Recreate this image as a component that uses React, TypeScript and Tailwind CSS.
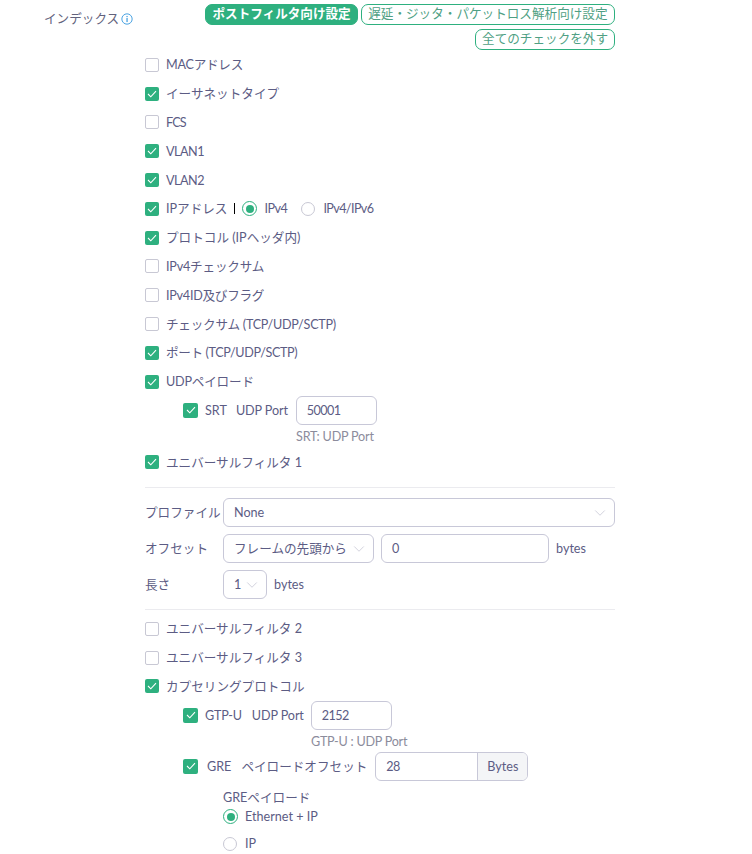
import { ChevronDown } from 'lucide-react';

function CheckBox(props: { checked?: boolean; nested?: boolean }) {
  if (props.checked) {
    return (
      <span className={`flex shrink-0 items-center justify-center rounded-[2px] bg-[#2eb07f] ${props.nested ? 'h-[15px] w-[15px]' : 'h-[14px] w-[14px]'}`}>
        <svg width="10" height="8" viewBox="0 0 10 8" fill="none">
          <path d="M1 4l2.8 2.8L9 1.2" stroke="#fff" strokeWidth="1.1" />
        </svg>
      </span>
    );
  }
  return <span className="block h-[14px] w-[14px] shrink-0 rounded-[2px] border border-[#c8c8d4] bg-white" />;
}

function Radio(props: { checked?: boolean; className?: string }) {
  if (props.checked) {
    return (
      <span className={`flex h-[15px] w-[15px] shrink-0 items-center justify-center rounded-full border border-[#2eb07f] bg-white ${props.className ?? ''}`}>
        <span className="h-[8px] w-[8px] rounded-full bg-[#2eb07f]" />
      </span>
    );
  }
  return <span className={`block h-[14px] w-[14px] shrink-0 rounded-full border border-[#c8c8d4] bg-white ${props.className ?? ''}`} />;
}

function CheckRow(props: { label: string; checked?: boolean; tight?: string }) {
  return (
    <div className="flex h-[28.8px] items-center gap-[7px]">
      <CheckBox checked={props.checked} />
      <span className={`pt-[2px] ${props.tight ?? ''}`}>{props.label}</span>
    </div>
  );
}

function Select(props: { value: string; className: string }) {
  return (
    <div className={`flex h-[29px] shrink-0 items-center justify-between rounded-[6px] border border-[#c8c8d8] bg-white pl-[10px] pr-[5px] ${props.className}`}>
      <span className="pt-[2px]">{props.value}</span>
      <ChevronDown size={18} strokeWidth={0.9} className="text-[#bcbccc]" />
    </div>
  );
}

function Input(props: { value: string; className: string }) {
  return (
    <div className={`flex h-[29px] shrink-0 items-center rounded-[6px] border border-[#c8c8d8] bg-white pl-[10px] pt-[2px] tracking-[-0.6px] ${props.className}`}>
      {props.value}
    </div>
  );
}

export default function App() {
  return (
    <div
      className="h-[854px] w-[752px] overflow-hidden bg-white pt-[4px] text-[12.6px] text-[#5c5c84]"
      style={{ fontFamily: 'Lato, "Noto Sans CJK JP", sans-serif' }}
    >
      <div className="ml-[44px] flex w-[571px]">
        <div className="flex h-[21px] w-[120px] shrink-0 items-center gap-[2px] pt-[8px] text-[#62627c]">
          <span className="pt-[2px]">インデックス</span>
          <svg width="12" height="12" viewBox="0 0 13 13" fill="none" className="shrink-0">
            <circle cx="6.5" cy="6.5" r="5.6" stroke="#3b9be0" />
            <rect x="5.9" y="5.4" width="1.3" height="4.4" fill="#3b9be0" />
            <rect x="5.9" y="3.2" width="1.3" height="1.3" fill="#3b9be0" />
          </svg>
        </div>
        <div className="flex grow flex-wrap justify-end gap-x-[3px] gap-y-[4px]">
          <span className="flex h-[21px] items-center rounded-[7px] border border-[#2eb07f] bg-[#2eb07f] px-[6px] font-bold text-white">
            ポストフィルタ向け設定
          </span>
          <span className="flex h-[21px] items-center rounded-[7px] border border-[#2eb07f] bg-white px-[6.5px] text-[#4f9f84]">
            遅延・ジッタ・パケットロス解析向け設定
          </span>
          <span className="flex h-[21px] items-center rounded-[7px] border border-[#2eb07f] bg-white px-[6px] text-[#4f9f84]">
            全てのチェックを外す
          </span>
        </div>
      </div>

      <div className="ml-[145px] mt-[0.5px] w-[470px]">
        <CheckRow label="MACアドレス" tight="tracking-[-0.25px]" />
        <CheckRow label="イーサネットタイプ" checked />
        <CheckRow label="FCS" tight="tracking-[-0.8px]" />
        <CheckRow label="VLAN1" checked tight="tracking-[-0.5px]" />
        <CheckRow label="VLAN2" checked tight="tracking-[-0.5px]" />
        <div className="flex h-[28.8px] items-center">
          <CheckBox checked />
          <span className="ml-[7px] pt-[2px]">IPアドレス</span>
          <span className="ml-[7px] h-[11px] w-[1px] bg-black" />
          <Radio checked className="ml-[7px]" />
          <span className="ml-[7px] pt-[2px] tracking-[-0.5px]">IPv4</span>
          <Radio className="ml-[14px]" />
          <span className="ml-[8px] pt-[2px] tracking-[-0.6px]">IPv4/IPv6</span>
        </div>
        <CheckRow label="プロトコル (IPヘッダ内)" checked />
        <CheckRow label="IPv4チェックサム" tight="tracking-[-0.2px]" />
        <CheckRow label="IPv4ID及びフラグ" tight="tracking-[-0.25px]" />
        <CheckRow label="チェックサム (TCP/UDP/SCTP)" tight="tracking-[-0.25px]" />
        <CheckRow label="ポート (TCP/UDP/SCTP)" checked tight="tracking-[-0.35px]" />
        <CheckRow label="UDPペイロード" checked tight="tracking-[-0.2px]" />

        <div className="ml-[38px] mt-[-0.5px] flex h-[29px] items-center">
          <CheckBox checked nested />
          <span className="ml-[7px] pt-[2px]">SRT</span>
          <span className="ml-[9px] pt-[2px] tracking-[-0.1px]">UDP Port</span>
          <Input value="50001" className="ml-[8px] w-[81px]" />
        </div>
        <div className="ml-[151px] mt-[2px] h-[18px] pt-[1px] leading-[18px] tracking-[-0.2px] text-[#8c8c9c]">SRT: UDP Port</div>
        <div className="mt-[3px]">
          <CheckRow label="ユニバーサルフィルタ 1" checked />
        </div>

        <div className="mt-[11px] h-px bg-[#ebebef]" />

        <div className="mt-[10px] flex h-[29px] items-center">
          <span className="w-[78px] shrink-0 whitespace-nowrap pt-[2px]">プロファイル</span>
          <Select value="None" className="w-[392px]" />
        </div>
        <div className="mt-[7px] flex h-[29px] items-center">
          <span className="w-[78px] shrink-0 pt-[2px]">オフセット</span>
          <Select value="フレームの先頭から" className="w-[151px]" />
          <Input value="0" className="ml-[7px] w-[168px]" />
          <span className="ml-[7px] pt-[2px]">bytes</span>
        </div>
        <div className="mt-[7px] flex h-[29px] items-center">
          <span className="w-[78px] shrink-0 pt-[2px]">長さ</span>
          <Select value="1" className="w-[44px]" />
          <span className="ml-[7px] pt-[2px]">bytes</span>
        </div>

        <div className="mt-[10px] h-px bg-[#ebebef]" />

        <div className="mt-[4px]">
          <CheckRow label="ユニバーサルフィルタ 2" />
          <CheckRow label="ユニバーサルフィルタ 3" />
          <CheckRow label="カプセリングプロトコル" checked />
        </div>

        <div className="ml-[38px] flex h-[29px] items-center">
          <CheckBox checked nested />
          <span className="ml-[7px] pt-[2px] tracking-[-0.2px]">GTP-U</span>
          <span className="ml-[10px] pt-[2px] tracking-[-0.1px]">UDP Port</span>
          <Input value="2152" className="ml-[7px] w-[81px]" />
        </div>
        <div className="ml-[166px] mt-[2px] h-[18px] pt-[1px] leading-[18px] tracking-[-0.25px] text-[#8c8c9c]">GTP-U : UDP Port</div>
        <div className="ml-[38px] mt-[2px] flex h-[29px] items-center">
          <CheckBox checked nested />
          <span className="ml-[9px] pt-[2px]">GRE</span>
          <span className="ml-[10px] pt-[2px]">ペイロードオフセット</span>
          <div className="ml-[8px] flex h-[29px] w-[153px] shrink-0 overflow-hidden rounded-[6px] border border-[#c8c8d8]">
            <div className="flex w-[101px] items-center pl-[10px] pt-[2px] tracking-[-0.6px]">28</div>
            <div className="flex grow items-center justify-center border-l border-[#c8c8d8] bg-[#f4f5f7] pt-[2px]">Bytes</div>
          </div>
        </div>
        <div className="ml-[78px] mt-[7px] h-[18px] pt-[1px] leading-[18px]">GREペイロード</div>
        <div className="ml-[78px] mt-[1px] flex h-[20px] items-center gap-[7px]">
          <Radio checked />
          <span className="pt-[2px]">Ethernet + IP</span>
        </div>
        <div className="ml-[78px] mt-[7px] flex h-[20px] items-center gap-[8px]">
          <Radio />
          <span className="pt-[2px]">IP</span>
        </div>
      </div>
    </div>
  );
}
